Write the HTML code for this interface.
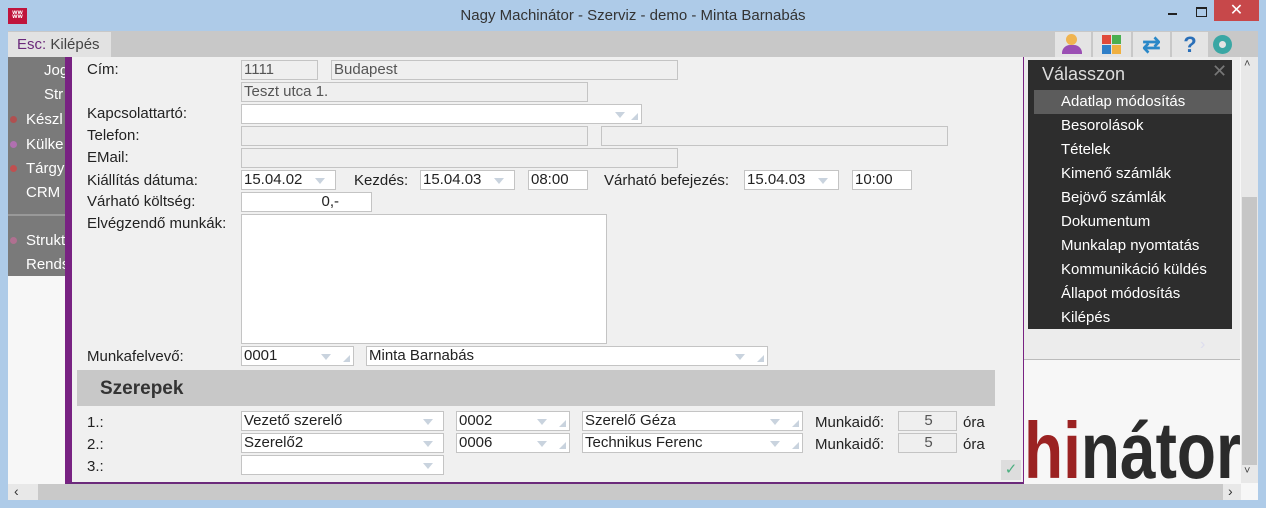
<!DOCTYPE html>
<html><head><meta charset="utf-8"><style>
*{margin:0;padding:0;box-sizing:border-box}
body{width:1266px;height:508px;background:#aecbe8;position:relative;overflow:hidden;font-family:"Liberation Sans",Arial,sans-serif;font-size:15px;color:#222}
.a{position:absolute}
.f{position:absolute;height:20px;border:1px solid #c4c4c4;background:#fff;font-size:15px;line-height:18px;padding-left:2px;white-space:nowrap;overflow:hidden;color:#222}
.ro{background:#efefef;color:#555}
.dd::after{content:"";position:absolute;right:var(--r,10px);top:7px;border-left:5px solid transparent;border-right:5px solid transparent;border-top:6px solid #c9d3de}
.rs::before{content:"";position:absolute;right:3px;bottom:3px;border-left:7px solid transparent;border-bottom:7px solid #c9d3de}
.l{position:absolute;font-size:15px;white-space:nowrap;color:#222}
.m{position:absolute;left:1061px;color:#fff;font-size:15px}
</style></head><body>
<!-- title bar -->
<div class="a" style="left:8px;top:8px;width:19px;height:16px;background:#c0143c;color:#fff;font-size:10px;font-weight:bold;line-height:16px;text-align:center">ʬʬ</div>
<div class="a" style="left:0;top:7px;width:1266px;text-align:center;font-size:15px;color:#333">Nagy Machinátor - Szerviz - demo - Minta Barnabás</div>
<div class="a" style="left:1168px;top:13px;width:9px;height:2px;background:#222"></div>
<div class="a" style="left:1196px;top:7px;width:11px;height:10px;border:1px solid #222;border-top-width:2px"></div>
<div class="a" style="left:1214px;top:0;width:45px;height:21px;background:#c7484a;color:#fff;text-align:center;font-size:16px;line-height:21px">✕</div>
<!-- client -->
<div class="a" style="left:8px;top:31px;width:1250px;height:469px;background:#f7f7f7"></div>
<div class="a" style="left:8px;top:31px;width:1250px;height:26px;background:#c8c8c8"></div>
<div class="a" style="left:8px;top:32px;width:103px;height:25px;background:#e2e2e2;line-height:25px;padding-left:9px;font-size:15px;color:#444"><span style="color:#6b2a7b">Esc:</span> Kilépés</div>
<!-- toolbar icons -->
<div class="a" style="left:1055px;top:32px;width:36px;height:25px;background:#e4e4e4"></div>
<div class="a" style="left:1066px;top:34px;width:11px;height:11px;border-radius:50%;background:#f0b450"></div>
<div class="a" style="left:1062px;top:45px;width:20px;height:9px;border-radius:8px 8px 0 0;background:#9b4fb4"></div>
<div class="a" style="left:1093px;top:32px;width:38px;height:25px;background:#e4e4e4"></div>
<div class="a" style="left:1102px;top:35px;width:9px;height:9px;background:#e04a3a"></div>
<div class="a" style="left:1112px;top:35px;width:9px;height:9px;background:#4caf50"></div>
<div class="a" style="left:1102px;top:45px;width:9px;height:9px;background:#2f7fc8"></div>
<div class="a" style="left:1112px;top:45px;width:9px;height:9px;background:#f0b040"></div>
<div class="a" style="left:1133px;top:32px;width:37px;height:25px;background:#e4e4e4;color:#2a88c8;font-size:22px;line-height:25px;text-align:center;font-weight:bold">⇄</div>
<div class="a" style="left:1172px;top:32px;width:36px;height:25px;background:#e4e4e4;color:#2a6fb8;font-size:22px;line-height:25px;text-align:center;font-weight:bold">?</div>
<div class="a" style="left:1213px;top:35px;width:19px;height:19px;border-radius:50%;background:#3aa7a4"></div>
<div class="a" style="left:1219px;top:41px;width:7px;height:7px;border-radius:50%;background:#e4e4e4"></div>
<!-- left sidebar -->
<div class="a" style="left:8px;top:57px;width:57px;height:219px;background:#7a7a7a"></div>
<div class="a" style="left:8px;top:214px;width:57px;height:2px;background:#999"></div>
<div class="a" style="left:10px;top:116px;width:7px;height:7px;border-radius:50%;background:#b05050"></div>
<div class="a" style="left:10px;top:141px;width:7px;height:7px;border-radius:50%;background:#b070b0"></div>
<div class="a" style="left:10px;top:165px;width:7px;height:7px;border-radius:50%;background:#c05050"></div>
<div class="a" style="left:10px;top:237px;width:7px;height:7px;border-radius:50%;background:#b07090"></div>
<div class="l" style="left:44px;top:62px;color:#fff">Jog</div>
<div class="l" style="left:44px;top:86px;color:#fff">Str</div>
<div class="l" style="left:26px;top:111px;color:#fff">Készl</div>
<div class="l" style="left:26px;top:136px;color:#fff">Külke</div>
<div class="l" style="left:26px;top:160px;color:#fff">Tárgy</div>
<div class="l" style="left:26px;top:184px;color:#fff">CRM</div>
<div class="l" style="left:26px;top:232px;color:#fff">Strukt</div>
<div class="l" style="left:26px;top:256px;color:#fff">Rends</div>
<!-- right area -->
<div class="a" style="left:1023px;top:57px;width:217px;height:303px;background:#ececec;border-bottom:1px solid #bbb"></div>
<div class="a" style="left:1200px;top:336px;color:#dde;font-size:16px">›</div>
<div class="a" style="left:1241px;top:57px;width:17px;height:426px;background:#e8e8e8"></div>
<div class="a" style="left:1242px;top:197px;width:15px;height:268px;background:#c6c6c6"></div>
<div class="a" style="left:1244px;top:58px;font-size:11px;color:#444">˄</div>
<div class="a" style="left:1244px;top:465px;font-size:11px;color:#444">˅</div>
<div class="a" style="left:1024px;top:405px;width:216px;height:78px;overflow:hidden">
<div style="font-family:'Liberation Sans',sans-serif;font-weight:bold;font-size:64px;line-height:64px;white-space:nowrap;transform:scaleY(1.25);transform-origin:0 58px;margin-top:20px"><span style="color:#9b2222">hi</span><span style="color:#2b2b2b">nátor</span></div></div>
<!-- h scrollbar -->
<div class="a" style="left:8px;top:484px;width:1233px;height:16px;background:#e8e8e8"></div>
<div class="a" style="left:38px;top:484px;width:1185px;height:16px;background:#c9c9c9"></div>
<div class="a" style="left:14px;top:483px;font-size:14px;color:#333">‹</div>
<div class="a" style="left:1228px;top:483px;font-size:14px;color:#333">›</div>
<!-- menu -->
<div class="a" style="left:1028px;top:60px;width:204px;height:269px;background:#2d2d2d"></div>
<div class="a" style="left:1042px;top:64px;color:#ddd;font-size:18px">Válasszon</div>
<div class="a" style="left:1212px;top:61px;color:#777;font-size:18px">✕</div>
<div class="a" style="left:1034px;top:90px;width:198px;height:24px;background:#5c5c5c"></div>
<div class="m" style="top:93px">Adatlap módosítás</div>
<div class="m" style="top:117px">Besorolások</div>
<div class="m" style="top:141px">Tételek</div>
<div class="m" style="top:165px">Kimenő számlák</div>
<div class="m" style="top:189px">Bejövő számlák</div>
<div class="m" style="top:213px">Dokumentum</div>
<div class="m" style="top:237px">Munkalap nyomtatás</div>
<div class="m" style="top:261px">Kommunikáció küldés</div>
<div class="m" style="top:285px">Állapot módosítás</div>
<div class="m" style="top:309px">Kilépés</div>
<!-- form panel -->
<div class="a" style="left:65px;top:57px;width:959px;height:427px;background:#f0f0f0;border-left:7px solid #782282;border-right:1px solid #782282;border-bottom:2px solid #6b2a7b"></div>
<div class="l" style="left:87px;top:61px">Cím:</div>
<div class="f ro" style="left:241px;top:60px;width:77px">1111</div>
<div class="f ro" style="left:331px;top:60px;width:347px">Budapest</div>
<div class="f ro" style="left:241px;top:82px;width:347px">Teszt utca 1.</div>
<div class="l" style="left:87px;top:105px">Kapcsolattartó:</div>
<div class="f dd rs" style="left:241px;top:104px;width:401px;--r:16px"></div>
<div class="l" style="left:87px;top:127px">Telefon:</div>
<div class="f ro" style="left:241px;top:126px;width:347px"></div>
<div class="f ro" style="left:601px;top:126px;width:347px"></div>
<div class="l" style="left:87px;top:149px">EMail:</div>
<div class="f ro" style="left:241px;top:148px;width:437px"></div>
<div class="l" style="left:87px;top:172px">Kiállítás dátuma:</div>
<div class="f dd" style="left:241px;top:170px;width:95px">15.04.02</div>
<div class="l" style="left:354px;top:172px">Kezdés:</div>
<div class="f dd" style="left:420px;top:170px;width:95px">15.04.03</div>
<div class="f" style="left:528px;top:170px;width:60px">08:00</div>
<div class="l" style="left:604px;top:172px">Várható befejezés:</div>
<div class="f dd" style="left:744px;top:170px;width:95px">15.04.03</div>
<div class="f" style="left:852px;top:170px;width:60px">10:00</div>
<div class="l" style="left:87px;top:193px">Várható költség:</div>
<div class="f" style="left:241px;top:192px;width:131px;text-align:right;padding-right:32px">0,-</div>
<div class="l" style="left:87px;top:215px">Elvégzendő munkák:</div>
<div class="f" style="left:241px;top:214px;width:366px;height:130px"></div>
<div class="l" style="left:87px;top:348px">Munkafelvevő:</div>
<div class="f dd rs" style="left:241px;top:346px;width:113px;--r:22px">0001</div>
<div class="f dd rs" style="left:366px;top:346px;width:402px;--r:22px">Minta Barnabás</div>
<div class="a" style="left:77px;top:370px;width:918px;height:36px;background:#c8c8c8"></div>
<div class="a" style="left:100px;top:378px;font-size:19px;font-weight:bold;color:#333">Szerepek</div>
<div class="l" style="left:87px;top:414px">1.:</div>
<div class="l" style="left:87px;top:436px">2.:</div>
<div class="l" style="left:87px;top:458px">3.:</div>
<div class="f dd" style="left:241px;top:411px;width:203px">Vezető szerelő</div>
<div class="f dd" style="left:241px;top:433px;width:203px">Szerelő2</div>
<div class="f dd" style="left:241px;top:455px;width:203px"></div>
<div class="f dd rs" style="left:456px;top:411px;width:114px;--r:22px">0002</div>
<div class="f dd rs" style="left:456px;top:433px;width:114px;--r:22px">0006</div>
<div class="f dd rs" style="left:582px;top:411px;width:221px;--r:22px">Szerelő Géza</div>
<div class="f dd rs" style="left:582px;top:433px;width:221px;--r:22px">Technikus Ferenc</div>
<div class="l" style="left:815px;top:414px">Munkaidő:</div>
<div class="l" style="left:815px;top:436px">Munkaidő:</div>
<div class="f ro" style="left:898px;top:411px;width:59px;text-align:center">5</div>
<div class="f ro" style="left:898px;top:433px;width:59px;text-align:center">5</div>
<div class="l" style="left:963px;top:414px">óra</div>
<div class="l" style="left:963px;top:436px">óra</div>
<div class="a" style="left:1001px;top:460px;width:20px;height:20px;background:#ddd;color:#4caf80;text-align:center;font-size:15px;line-height:20px">✓</div>
</body></html>
